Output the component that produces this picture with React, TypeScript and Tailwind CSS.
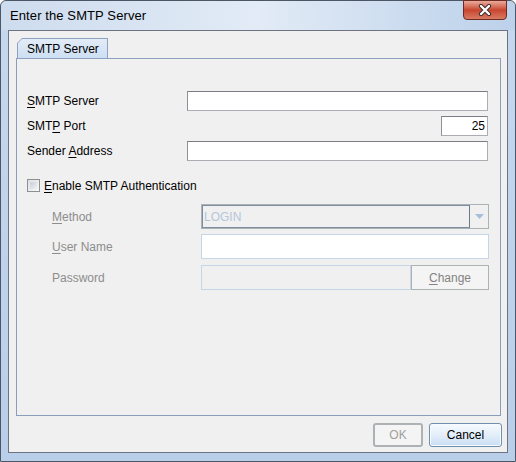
import React from 'react'

const font = { fontFamily: '"Liberation Sans", Arial, sans-serif' }

function Mn({ c }: { c: string }) {
  return <span className="underline underline-offset-[2px]">{c}</span>
}

function Field({ className = '', children }: { className?: string; children?: React.ReactNode }) {
  return <div className={`bg-white border border-[#abadb3] border-t-[#7a7d84] border-l-[#8e9198] ${className}`}>{children}</div>
}

export default function App() {
  return (
    <div style={font} className="w-[516px] h-[462px] overflow-hidden bg-white">
      <div className="relative w-[516px] h-[462px] rounded-t-[6px] border border-[#4c5665] bg-gradient-to-b from-[#c5d8ee] to-[#b9cfe9] flex flex-col">
        {/* title bar */}
        <div className="h-[29px] flex items-center pl-[9px] bg-gradient-to-r from-[#cddcee] via-[#e2ebf6] to-[#bcd1ea] rounded-t-[6px]">
          <span className="text-[13px] text-black tracking-[0.1px]">Enter the SMTP Server</span>
        </div>
        <div className="absolute right-[8px] top-[-1px] w-[44px] h-[20px] rounded-b-[4px] border border-[#6c2a22] bg-gradient-to-b from-[#e9aa9c] via-[#c8452f] to-[#d87a62] flex items-center justify-center">
          <svg width="16" height="12" viewBox="0 0 16 12">
            <path d="M4 2 L12 10 M12 2 L4 10" stroke="#3a2a2a" strokeWidth="4.2" strokeLinecap="round" />
            <path d="M4 2 L12 10 M12 2 L4 10" stroke="#ffffff" strokeWidth="2.4" strokeLinecap="round" />
          </svg>
        </div>

        {/* client area */}
        <div className="mx-[7px] h-[423px] border border-[#6d7380] bg-[#f0f0f0] flex flex-col pl-[7px] pr-[5px] pt-[7px]">
          {/* tab */}
          <div className="flex">
            <div className="ml-[1px] w-[91px] h-[20px] relative">
              <div className="absolute inset-0 bg-[#8ea2bf] [clip-path:polygon(5px_0,100%_0,100%_100%,0_100%,0_5px)]" />
              <div className="absolute left-px top-px right-px bottom-0 bg-gradient-to-b from-[#e3ecf7] to-[#cddff3] [clip-path:polygon(4px_0,100%_0,100%_100%,0_100%,0_4px)] flex items-center pl-[9px] text-[12px] text-black">
                SMTP Server
              </div>
            </div>
          </div>
          {/* panel */}
          <div className="w-[485px] h-[358px] border border-[#8a9dbd] border-t-[#8ea2bf] flex flex-col pl-[10px] pr-[12px] text-[12px] text-black">
            <div className="mt-[32px] h-[20px] flex items-center">
              <span className="w-[160px]"><Mn c="S" />MTP Server</span>
              <Field className="flex-1 h-[20px]" />
            </div>
            <div className="mt-[5px] h-[20px] flex items-center">
              <span className="flex-1">SMT<Mn c="P" /> Port</span>
              <Field className="w-[47px] h-[20px] flex items-center justify-end pr-[2px] text-[12px]">25</Field>
            </div>
            <div className="mt-[5px] h-[20px] flex items-center">
              <span className="w-[160px]">Sender <Mn c="A" />ddress</span>
              <Field className="flex-1 h-[20px]" />
            </div>
            <div className="mt-[15px] h-[19px] flex items-center gap-[4px]">
              <div className="w-[13px] h-[13px] border border-[#8e8f8f] bg-gradient-to-br from-[#dcdfe4] to-[#f7f8fa] p-[2px]">
                <div className="w-full h-full bg-gradient-to-br from-[#cbd0d8] to-[#eef0f4]" />
              </div>
              <span><Mn c="E" />nable SMTP Authentication</span>
            </div>
            <div className="pl-[25px] text-[#8d8d8d] flex flex-col mr-[-1px]">
              <div className="mt-[9px] h-[25px] flex items-center">
                <span className="w-[149px]"><Mn c="M" />ethod</span>
                <div className="flex-1 h-[25px] flex border border-[#adb2b5] bg-[#f0f0f0]">
                  <div className="flex-1 border border-[#7d8ea3] border-r-[#6d7a8a] flex items-center pl-[1px] text-[#b4c6da]">LOGIN</div>
                  <div className="w-[18px] flex items-center justify-center">
                    <svg width="9" height="5" viewBox="0 0 9 5"><path d="M0 0 H9 L4.5 5 Z" fill="#a8bfdc" /></svg>
                  </div>
                </div>
              </div>
              <div className="mt-[5px] h-[25px] flex items-center">
                <span className="w-[149px]"><Mn c="U" />ser Name</span>
                <div className="flex-1 h-[25px] bg-white border border-[#c4d6e8]" />
              </div>
              <div className="mt-[6px] h-[25px] flex items-center">
                <span className="w-[149px]">Password</span>
                <div className="flex-1 h-[25px] flex">
                  <div className="flex-1 border border-[#c4d6e8] bg-[#f0f0f0]" />
                  <div className="w-[78px] border border-[#adb2b5] bg-[#f4f4f4] flex items-center justify-center text-[#838383]">
                    <span><Mn c="C" />hange</span>
                  </div>
                </div>
              </div>
            </div>
          </div>
          {/* buttons */}
          <div className="mt-[7px] flex justify-end gap-[6px] text-[12px]">
            <div className="w-[50px] h-[24px] rounded-[3px] border-2 border-[#adb2b5] bg-[#f4f4f4] flex items-center justify-center text-[#a0a0a0]">OK</div>
            <div className="w-[73px] h-[24px] rounded-[3px] border border-[#6f8faf] bg-gradient-to-b from-[#f6fafe] via-[#e3eef9] to-[#c9def3] flex items-center justify-center text-black shadow-[inset_0_0_0_1px_#f5fbff]">Cancel</div>
          </div>
        </div>
      </div>
    </div>
  )
}
